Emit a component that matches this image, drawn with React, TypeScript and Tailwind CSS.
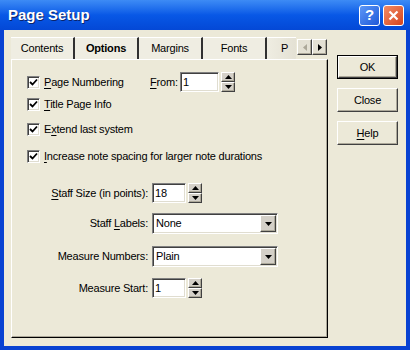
import React from 'react';

const ui = { fontFamily: '"Liberation Sans", Arial, sans-serif' };

// classic 3D raised / sunken edges
const raised =
  'border border-t-white border-l-white border-b-[#404040] border-r-[#404040] shadow-[inset_-1px_-1px_0_#aca899]';
const sunken =
  'border border-t-[#808080] border-l-[#808080] border-b-white border-r-white shadow-[inset_1px_1px_0_#404040,inset_-1px_-1px_0_#e0ddd0]';

function Ul({ text, at }: { text: string; at: number }) {
  return (
    <>
      {text.slice(0, at)}
      <span className="underline underline-offset-[2px]">{text[at]}</span>
      {text.slice(at + 1)}
    </>
  );
}

function Check({ label }: { label: React.ReactNode }) {
  return (
    <div className="flex items-center gap-[4px]">
      <div className={`w-[13px] h-[13px] bg-white flex items-center justify-center ${sunken}`}>
        <svg width="9" height="9" viewBox="0 0 9 9">
          <path d="M1 4 L3.5 6.5 L8 1.5" stroke="#000" strokeWidth="1.8" fill="none" />
        </svg>
      </div>
      <span>{label}</span>
    </div>
  );
}

function Arrow({ dir, color = '#000' }: { dir: 'up' | 'down' | 'left' | 'right'; color?: string }) {
  const d = {
    up: 'M0 4 L3.5 0 L7 4 Z',
    down: 'M0 0 L7 0 L3.5 4 Z',
    left: 'M4 0 L4 7 L0 3.5 Z',
    right: 'M0 0 L0 7 L4 3.5 Z',
  }[dir];
  const horiz = dir === 'up' || dir === 'down';
  return (
    <svg width={horiz ? 7 : 4} height={horiz ? 4 : 7} viewBox={horiz ? '0 0 7 4' : '0 0 4 7'}>
      <path d={d} fill={color} />
    </svg>
  );
}

function Spin() {
  return (
    <div className="flex flex-col w-[14px] h-[20px] bg-[#d4d0c8]">
      <div className={`flex-1 flex items-center justify-center ${raised}`}>
        <Arrow dir="up" />
      </div>
      <div className={`flex-1 flex items-center justify-center ${raised}`}>
        <Arrow dir="down" />
      </div>
    </div>
  );
}

function NumField({ value, w }: { value: string; w: string }) {
  return (
    <div className="flex items-center gap-[2px]">
      <div className={`${w} h-[20px] bg-white flex items-center pl-[2px] ${sunken}`}>{value}</div>
      <Spin />
    </div>
  );
}

function Combo({ value }: { value: string }) {
  return (
    <div className={`w-[126px] h-[21px] bg-white flex items-center ${sunken}`}>
      <span className="flex-1 pl-[3px]">{value}</span>
      <div className={`w-[16px] h-[17px] mr-[1px] bg-[#d4d0c8] flex items-center justify-center ${raised}`}>
        <Arrow dir="down" />
      </div>
    </div>
  );
}

function Btn({ children, def }: { children: React.ReactNode; def?: boolean }) {
  return (
    <div className={`w-[61px] h-[24px] ${def ? 'border border-black' : ''}`}>
      <div className={`w-full h-full flex items-center justify-center bg-[#ece9d8] ${raised}`}>{children}</div>
    </div>
  );
}

// the last tab is cut off by the scroll arrows, only its "P" shows
const tabs = ['Contents', 'Options', 'Margins', 'Fonts', 'P'];

export default function App() {
  return (
    <div
      className="w-[410px] h-[350px] flex flex-col bg-[#0842d2] text-[11px] tracking-[-0.2px] text-black"
      style={ui}
    >
      {/* Title bar */}
      <div className="h-[30px] flex items-center justify-between pl-[8px] pr-[6px] bg-gradient-to-b from-[#3d8bf5] via-[#0858e6] to-[#0448d6]">
        <span className="text-white font-bold text-[15px] tracking-normal [text-shadow:1px_1px_0_#0a246a]">
          Page Setup
        </span>
        <div className="flex gap-[3px]">
          <div className="w-[21px] h-[21px] rounded-[3px] border border-white bg-gradient-to-br from-[#5c97f7] to-[#1f58d8] flex items-center justify-center text-white font-bold text-[15px] tracking-normal">
            ?
          </div>
          <div className="w-[21px] h-[21px] rounded-[3px] border border-white bg-gradient-to-br from-[#f08a63] to-[#d6421a] flex items-center justify-center">
            <svg width="11" height="11" viewBox="0 0 11 11">
              <path d="M1.5 1.5 L9.5 9.5 M9.5 1.5 L1.5 9.5" stroke="#fff" strokeWidth="2.2" />
            </svg>
          </div>
        </div>
      </div>

      {/* Body */}
      <div className="flex-1 mx-[4px] mb-[4px] bg-[#ece9d8] flex pl-[7px] pt-[6px]">
        {/* Tabs + panel */}
        <div className="w-[317px] flex flex-col">
          <div className="h-[23px] flex items-end">
            <div className="w-[285px] h-[22px] flex overflow-hidden">
              {tabs.map((t, i) => (
                <div
                  key={t}
                  className={`shrink-0 h-full flex items-center border-t border-white bg-[#efede2] ${
                    i === 4
                      ? 'w-[29px] pl-[14px] bg-gradient-to-r from-[#efede2] to-[#e4e1d4]'
                      : 'w-[64px] justify-center border-r-2 border-r-[#303030]'
                  } ${i === 1 ? 'font-bold' : ''}`}
                >
                  {t}
                </div>
              ))}
            </div>
            <div className="flex mb-[4px] ml-[1px]">
              <div className={`w-[15px] h-[16px] bg-[#e4e1d4] flex items-center justify-center ${raised}`}>
                <Arrow dir="left" color="#aca899" />
              </div>
              <div className={`w-[15px] h-[16px] bg-[#e4e1d4] flex items-center justify-center ${raised}`}>
                <Arrow dir="right" />
              </div>
            </div>
          </div>

          <div className="h-[279px] border-t border-l border-white border-r border-b border-r-black border-b-black shadow-[inset_-1px_-1px_0_#aca899] pl-[15px] pt-[12px] flex flex-col">
            <div className="h-[20px] flex items-center">
              <div className="w-[123px]">
                <Check label={<Ul text="Page Numbering" at={0} />} />
              </div>
              <span className="w-[30px]">
                <Ul text="From:" at={0} />
              </span>
              <NumField value="1" w="w-[39px]" />
            </div>
            <div className="h-[20px] mt-[2px] flex items-center">
              <Check label={<Ul text="Title Page Info" at={0} />} />
            </div>
            <div className="h-[20px] mt-[5px] flex items-center">
              <Check label={<Ul text="Extend last system" at={1} />} />
            </div>
            <div className="h-[20px] mt-[7px] flex items-center">
              <Check label={<Ul text="Increase note spacing for larger note durations" at={0} />} />
            </div>

            <div className="grid grid-cols-[121px_auto] gap-x-[4px] items-center mt-[17px]">
              <span className="h-[20px] flex items-center justify-end">
                <Ul text="Staff Size (in points):" at={0} />
              </span>
              <NumField value="18" w="w-[34px]" />

              <span className="mt-[10px] flex items-center justify-end">
                <span>
                  Staff <Ul text="Labels:" at={0} />
                </span>
              </span>
              <div className="mt-[10px]">
                <Combo value="None" />
              </div>

              <span className="mt-[12px] flex items-center justify-end">Measure Numbers:</span>
              <div className="mt-[12px]">
                <Combo value="Plain" />
              </div>

              <span className="mt-[11px] flex items-center justify-end">Measure Start:</span>
              <div className="mt-[11px]">
                <NumField value="1" w="w-[34px]" />
              </div>
            </div>
          </div>
        </div>

        {/* Buttons */}
        <div className="ml-[9px] pt-[19px] flex flex-col gap-[9px]">
          <Btn def>OK</Btn>
          <Btn>Close</Btn>
          <Btn>
            <Ul text="Help" at={0} />
          </Btn>
        </div>
      </div>
    </div>
  );
}
